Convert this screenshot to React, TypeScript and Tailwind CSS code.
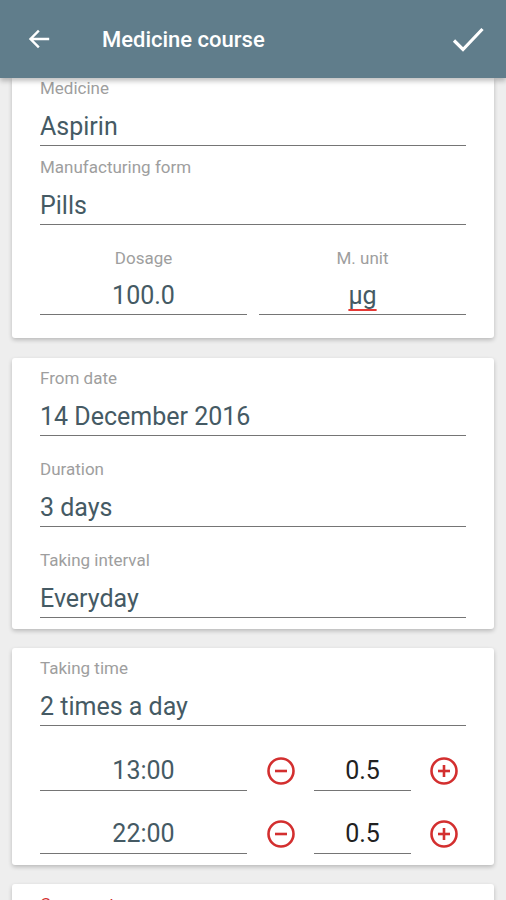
import React from 'react';

const label = 'text-[17px] leading-[20px] text-[#9e9e9e]';
const value = 'text-[25px] leading-[32px] text-[#455a64]';
const line = 'border-b border-[#757575]';

const Field = ({ title, text, gap }: { title: string; text: string; gap: string }) => (
  <div className={gap}>
    <div className={label}>{title}</div>
    <div className={`mt-[13px] pb-[2px] ${value} ${line}`}>{text}</div>
  </div>
);

const Stepper = ({ minus }: { minus?: boolean }) => (
  <svg width="32" height="32" viewBox="0 0 32 32" fill="none" stroke="#d32f2f" strokeWidth="2.6">
    <circle cx="16" cy="16" r="12.5" />
    <line x1="10" y1="16" x2="22" y2="16" />
    {!minus && <line x1="16" y1="10" x2="16" y2="22" />}
  </svg>
);

const TimeRow = ({ time, top }: { time: string; top: string }) => (
  <div className={`flex items-end ${top}`}>
    <div className={`w-[207px] pb-[3px] text-center ${value} ${line}`}>{time}</div>
    <div className="w-[67px] flex justify-center pb-[4px]">
      <Stepper minus />
    </div>
    <div className={`w-[97px] pb-[3px] text-center text-[25px] leading-[32px] text-[#212121] ${line}`}>0.5</div>
    <div className="ml-[17px] pb-[4px]">
      <Stepper />
    </div>
  </div>
);

const card = 'mx-[12px] bg-white rounded-[3px] shadow-[0_2px_4px_rgba(0,0,0,0.22)] px-[28px]';

export default function App() {
  return (
    <div className="h-[900px] w-[506px] overflow-hidden bg-[#eeeeee] flex flex-col" style={{ fontFamily: 'Roboto, "Noto Sans", sans-serif' }}>
      <header className="h-[78px] shrink-0 bg-[#607d8b] flex items-center relative z-10 shadow-[0_3px_5px_rgba(0,0,0,0.25)]">
        <svg className="ml-[27px]" width="24" height="24" viewBox="0 0 24 24" fill="none" stroke="white" strokeWidth="2.4" strokeLinecap="square">
          <path d="M21 12H4M11 4.5L3.5 12l7.5 7.5" />
        </svg>
        <h1 className="ml-[51px] text-white text-[22px] font-medium">Medicine course</h1>
        <svg className="ml-auto mr-[20px]" width="36" height="36" viewBox="0 0 36 36" fill="none" stroke="white" strokeWidth="3.2">
          <path d="M4 19.5L13 28.5L32.5 8" />
        </svg>
      </header>

      <div className="flex flex-col">
        <div className={`${card} rounded-t-none pb-[23px]`}>
          <Field gap="" title="Medicine" text="Aspirin" />
          <Field gap="mt-[11px]" title="Manufacturing form" text="Pills" />
          <div className="mt-[23px] flex gap-[12px]">
            <div className="flex-1 text-center">
              <div className={label}>Dosage</div>
              <div className={`mt-[12px] pb-[2px] ${value} ${line}`}>100.0</div>
            </div>
            <div className="flex-1 text-center">
              <div className={label}>M. unit</div>
              <div className={`mt-[12px] pb-[2px] ${value} ${line}`}>
                <span className="underline decoration-[#e53935] decoration-2 underline-offset-[5px]">µg</span>
              </div>
            </div>
          </div>
        </div>

        <div className={`${card} mt-[20px] pt-[10px] pb-[11px]`}>
          <Field gap="" title="From date" text="14 December 2016" />
          <Field gap="mt-[23px]" title="Duration" text="3 days" />
          <Field gap="mt-[23px]" title="Taking interval" text="Everyday" />
        </div>

        <div className={`${card} mt-[19px] pt-[10px] pb-[11px]`}>
          <Field gap="" title="Taking time" text="2 times a day" />
          <TimeRow time="13:00" top="mt-[29px]" />
          <TimeRow time="22:00" top="mt-[27px]" />
        </div>

        <div className={`${card} mt-[19px] pt-[10px] h-[60px]`}>
          <div className="text-[17px] leading-[20px] text-[#d32f2f]">Comment</div>
        </div>
      </div>
    </div>
  );
}
